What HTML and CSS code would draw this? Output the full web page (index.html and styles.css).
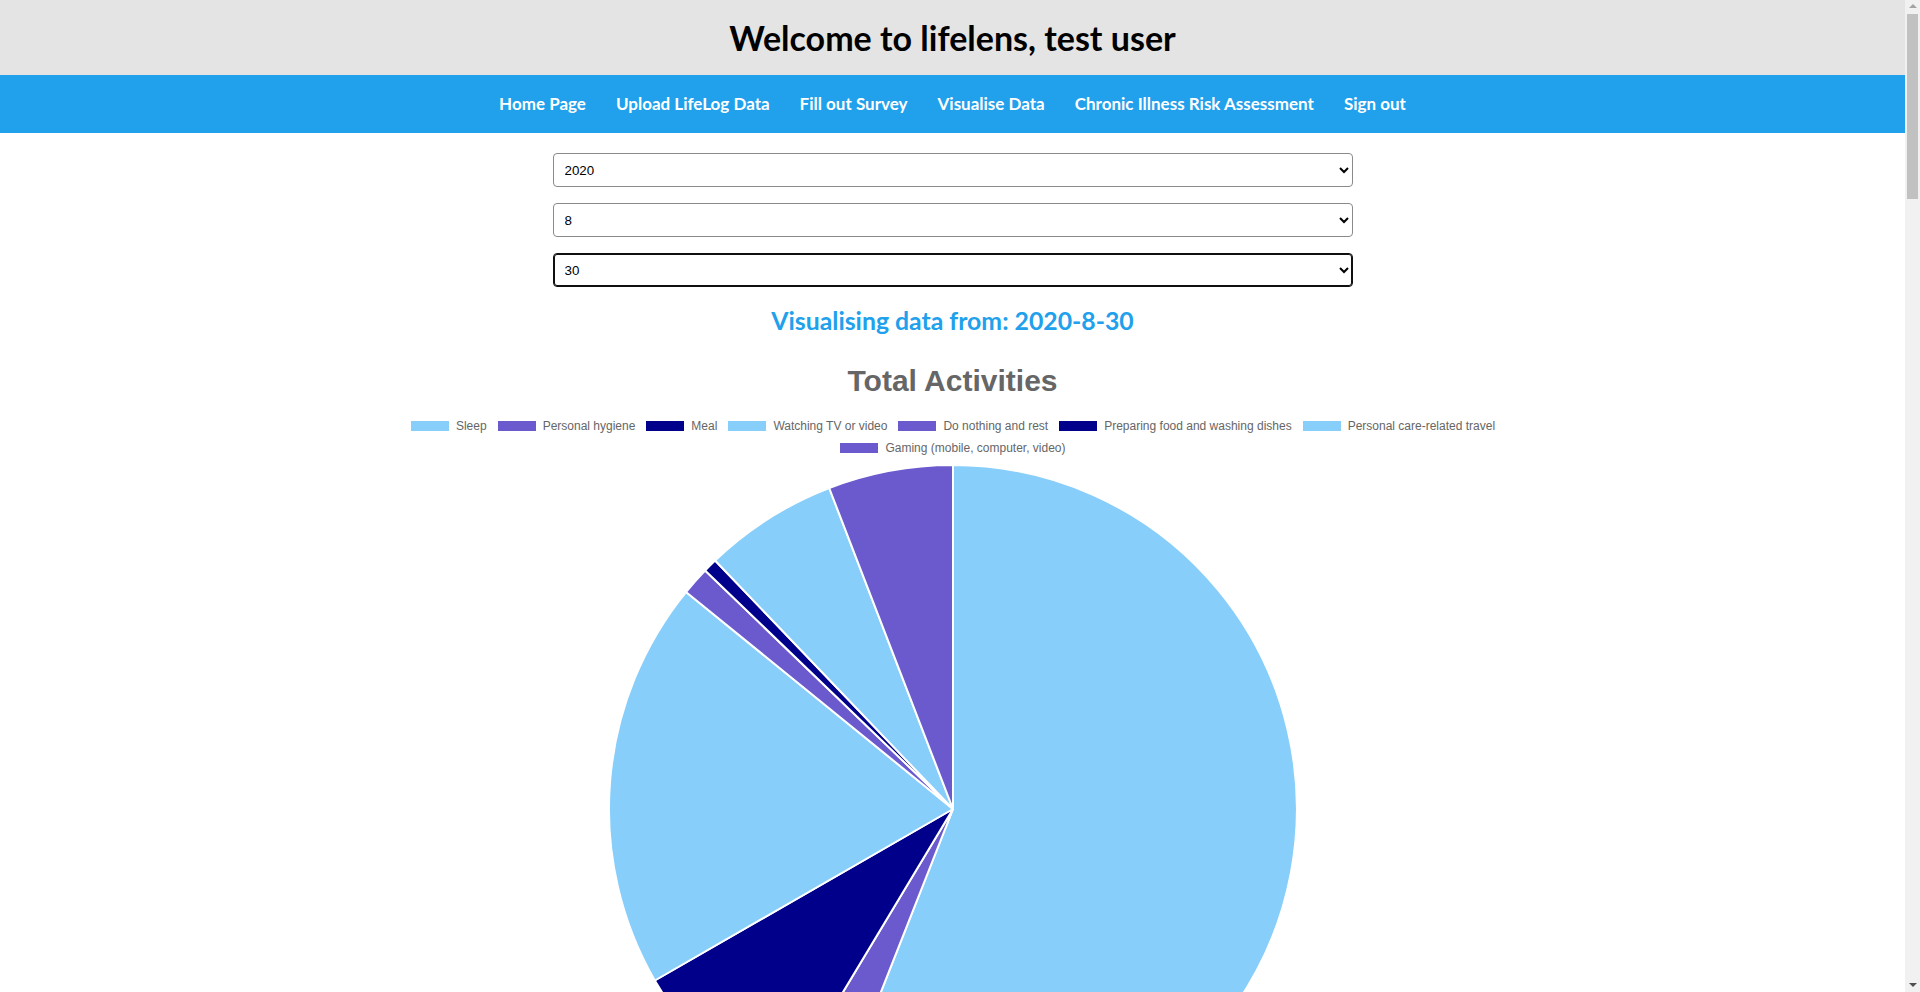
FILE: index.html
```html
<!DOCTYPE html>
<html lang="en">
<head>
<meta charset="utf-8">
<title>lifelens - Visualise Data</title>
<link rel="stylesheet" href="styles.css">
</head>
<body>
<header class="top">
  <h1 class="welcome">Welcome to lifelens, test user</h1>
</header>
<nav class="menu">
  <a class="menu-link" href="#">Home Page</a>
  <a class="menu-link" href="#">Upload LifeLog Data</a>
  <a class="menu-link" href="#">Fill out Survey</a>
  <a class="menu-link" href="#">Visualise Data</a>
  <a class="menu-link" href="#">Chronic Illness Risk Assessment</a>
  <a class="menu-link" href="#">Sign out</a>
</nav>
<main class="content">
  <form class="date-form">
    <select class="date-select">
      <option>2019</option>
      <option selected>2020</option>
      <option>2021</option>
    </select>
    <select class="date-select">
      <option>7</option>
      <option selected>8</option>
      <option>9</option>
    </select>
    <select class="date-select focused">
      <option>29</option>
      <option selected>30</option>
      <option>31</option>
    </select>
  </form>
  <h2 class="vis-heading">Visualising data from: 2020-8-30</h2>
  <section class="chart">
    <div class="chart-title">Total Activities</div>
    <ul class="legend">
      <li class="legend-item"><span class="swatch sky"></span>Sleep</li>
      <li class="legend-item"><span class="swatch slate"></span>Personal hygiene</li>
      <li class="legend-item"><span class="swatch navy"></span>Meal</li>
      <li class="legend-item"><span class="swatch sky"></span>Watching TV or video</li>
      <li class="legend-item"><span class="swatch slate"></span>Do nothing and rest</li>
      <li class="legend-item"><span class="swatch navy"></span>Preparing food and washing dishes</li>
      <li class="legend-item"><span class="swatch sky"></span>Personal care-related travel</li>
      <li class="legend-item"><span class="swatch slate"></span>Gaming (mobile, computer, video)</li>
    </ul>
    <svg class="pie" width="700" height="700" viewBox="0 0 700 700">
      <g stroke="#ffffff" stroke-width="2" stroke-linejoin="round">
        <path fill="#87CEFA" d="M350,350 L350,6 A344,344 0 1 1 223.9,670.1 Z"/>
        <path fill="#6A5ACD" d="M350,350 L223.9,670.1 A344,344 0 0 1 172.8,644.9 Z"/>
        <path fill="#00008B" d="M350,350 L172.8,644.9 A344,344 0 0 1 51.8,521.5 Z"/>
        <path fill="#87CEFA" d="M350,350 L51.8,521.5 A344,344 0 0 1 83,133 Z"/>
        <path fill="#6A5ACD" d="M350,350 L83,133 A344,344 0 0 1 102.1,111.5 Z"/>
        <path fill="#00008B" d="M350,350 L102.1,111.5 A344,344 0 0 1 112.1,101.5 Z"/>
        <path fill="#87CEFA" d="M350,350 L112.1,101.5 A344,344 0 0 1 226.2,29 Z"/>
        <path fill="#6A5ACD" d="M350,350 L226.2,29 A344,344 0 0 1 350,6 Z"/>
      </g>
    </svg>
  </section>
</main>
<div class="scrollbar" aria-hidden="true">
  <span class="sb-arrow sb-up"></span>
  <span class="sb-thumb"></span>
  <span class="sb-arrow sb-down"></span>
</div>
</body>
</html>
```
FILE: styles.css
```css
html, body {
  margin: 0;
  padding: 0;
  background: #ffffff;
}

body {
  font-family: Lato, "Open Sans", "DejaVu Sans", sans-serif;
  margin-right: 15px;
}

.top {
  background: #e4e4e4;
  height: 75px;
  display: flex;
  align-items: center;
  justify-content: center;
}

.welcome {
  margin: 0;
  font-size: 34px;
  font-weight: 700;
  color: #000000;
  line-height: 1;
}

.menu {
  background: #21a0ec;
  height: 58px;
  display: flex;
  align-items: center;
  justify-content: center;
}

.menu-link {
  color: #ffffff;
  text-decoration: none;
  font-weight: 700;
  font-size: 17px;
  padding: 0 15px 2px;
}

.content {
  display: flex;
  flex-direction: column;
  align-items: center;
}

.date-form {
  display: flex;
  flex-direction: column;
  gap: 16px;
  padding-top: 20px;
}

.date-select {
  width: 800px;
  height: 34px;
  box-sizing: border-box;
  border: 1px solid #8a8a8a;
  border-radius: 4px;
  padding: 0 7px;
  background: #ffffff;
  font-family: "Liberation Sans", Arial, sans-serif;
  font-size: 13.33px;
  color: #000000;
}

.date-select.focused {
  border-color: #101010;
  box-shadow: inset 0 0 0 1px #101010;
}

.vis-heading {
  margin: 20px 0 0;
  font-size: 24.8px;
  line-height: 28px;
  font-weight: 700;
  color: #21a0ec;
}

.chart {
  display: flex;
  flex-direction: column;
  align-items: center;
  width: 1200px;
}

.chart-title {
  margin-top: 28px;
  font-family: "Liberation Sans", Arial, sans-serif;
  font-weight: 700;
  font-size: 30px;
  line-height: 36px;
  color: #666666;
}

.legend {
  list-style: none;
  margin: 16px 0 0;
  padding: 0;
  display: flex;
  flex-wrap: wrap;
  justify-content: center;
  column-gap: 10px;
  max-width: 1120px;
  font-family: "Liberation Sans", Arial, sans-serif;
  font-size: 12px;
  color: #666666;
}

.legend-item {
  display: flex;
  align-items: center;
  height: 22px;
  gap: 6px;
}

.swatch {
  width: 38px;
  height: 10px;
  margin: 0 1px;
}

.sky { background: #87CEFA; }
.slate { background: #6A5ACD; }
.navy { background: #00008B; }

.pie {
  display: block;
  flex-shrink: 0;
}

.scrollbar {
  position: fixed;
  top: 0;
  right: 0;
  width: 15px;
  height: 100vh;
  background: #f1f1f1;
  display: flex;
  flex-direction: column;
  align-items: center;
}

.sb-arrow {
  width: 0;
  height: 0;
  border-left: 4px solid transparent;
  border-right: 4px solid transparent;
  flex-shrink: 0;
}

.sb-up {
  margin-top: 4px;
  border-bottom: 4px solid #a3a3a3;
}

.sb-down {
  margin-top: auto;
  margin-bottom: 5px;
  border-top: 4px solid #505050;
}

.sb-thumb {
  width: 11px;
  height: 185px;
  margin-top: 6px;
  background: #c1c1c1;
}
```
